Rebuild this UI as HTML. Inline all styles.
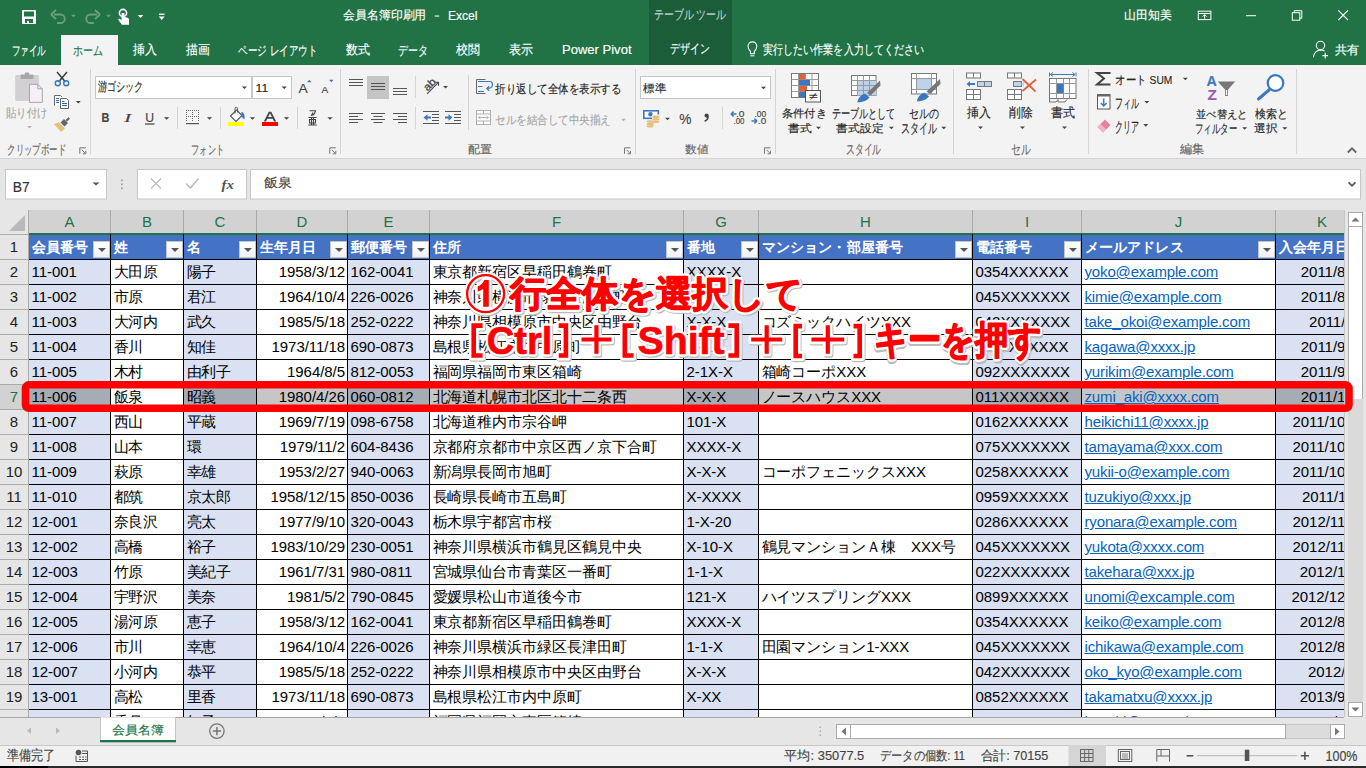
<!DOCTYPE html><html lang="ja"><head><meta charset="utf-8"><style>
*{box-sizing:border-box}
html,body{margin:0;padding:0;width:1366px;height:768px;overflow:hidden;background:#e6e6e6;font-family:"Liberation Sans",sans-serif}
.ab{position:absolute}
.colh{font-size:15px;line-height:24px;text-align:center;color:#217346;background:#d2d2d2}
.rowh{font-size:15px;line-height:24px;text-align:center}
.cell{font-size:15px;letter-spacing:-0.05px;line-height:24px;padding-left:2.5px;white-space:nowrap;overflow:hidden;color:#000}
.cell.rt{text-align:right;padding-right:2px;padding-left:0}
.cell.lk{color:#0563c1;text-decoration:underline;letter-spacing:-0.15px}
.cell.hd{color:#fff;font-weight:bold;font-size:14.4px;letter-spacing:0.2px}
.tt{font-size:14px;line-height:18px;white-space:nowrap}
.tab{font-size:14px;line-height:18px;white-space:nowrap}
.callout{font-size:38px;font-weight:bold;color:#f00;white-space:nowrap;line-height:44px;-webkit-text-stroke:0px;text-shadow:2px 0 #fff,-2px 0 #fff,0 2px #fff,0 -2px #fff,1.5px 1.5px #fff,-1.5px 1.5px #fff,1.5px -1.5px #fff,-1.5px -1.5px #fff}
.fb{width:17px;height:17px;border:1px solid #c6c6c6;background:linear-gradient(#fff,#eef0f3)}
.fb:after{content:"";position:absolute;left:4px;top:6px;border-left:4px solid transparent;border-right:4px solid transparent;border-top:4px solid #555}
</style></head><body><svg class="ab" style="left:0;top:0" width="1366" height="768" font-family="Liberation Sans, sans-serif"><rect x="0" y="0" width="1366" height="65" fill="#217346"/><rect x="649" y="0" width="83" height="65" fill="#1c5d39"/><rect x="22" y="10" width="14" height="14" rx="1" fill="#fff"/><rect x="24" y="11.5" width="10" height="5" fill="#217346"/><rect x="25" y="19" width="8" height="4" fill="#217346"/><rect x="27" y="21" width="2" height="2.5" fill="#fff"/><path d="M54 14.5 H60.5 A4.2 4.2 0 0 1 60.5 23 H57" fill="none" stroke="#6a9f80" stroke-width="1.8"/><path d="M51 14.5 L56 10 M51 14.5 L56 19" fill="none" stroke="#6a9f80" stroke-width="1.8"/><path d="M71.00 14.70h5.00l-2.50 2.60z" fill="#6a9f80"/><path d="M97 14.5 H90.5 A4.2 4.2 0 0 0 90.5 23 H94" fill="none" stroke="#6a9f80" stroke-width="1.8"/><path d="M100 14.5 L95 10 M100 14.5 L95 19" fill="none" stroke="#6a9f80" stroke-width="1.8"/><path d="M106.00 14.70h5.00l-2.50 2.60z" fill="#6a9f80"/><circle cx="123" cy="13" r="3.6" fill="none" stroke="#fff" stroke-width="1.6"/><path d="M121.6 13 V20 L119 18.5 L118.2 19.8 L122 24.8 H129 V19.5 Q129 17.8 127 17.5 L124.4 17 V13 Z" fill="#fff"/><path d="M137.75 15.00h5.50l-2.75 3.00z" fill="#fff"/><rect x="159" y="13.6" width="5.5" height="1.3" fill="#fff"/><path d="M158.8 16.5 h5.8 l-2.9 3.6z" fill="#fff"/><text x="343.00" y="19.12" font-size="12.19" fill="#fff" textLength="83.30" lengthAdjust="spacingAndGlyphs" stroke="#fff" stroke-width="0.15">会員名簿印刷用</text><rect x="434.7" y="15.5" width="4.5" height="1.1" fill="#fff"/><text x="448.00" y="19.60" font-size="12.35" fill="#fff" textLength="29.50" lengthAdjust="spacingAndGlyphs" stroke="#fff" stroke-width="0.15">Excel</text><text x="654.00" y="19.25" font-size="13.29" fill="#c3d3c9" textLength="72.00" lengthAdjust="spacingAndGlyphs" stroke="#c3d3c9" stroke-width="0.15">テーブル ツール</text><text x="1124.30" y="19.12" font-size="12.19" fill="#fff" textLength="47.70" lengthAdjust="spacingAndGlyphs" stroke="#fff" stroke-width="0.15">山田知美</text><rect x="1198.3" y="11.2" width="12.6" height="8.4" fill="none" stroke="#fff" stroke-width="1"/><path d="M1199 13.5 h11.5" stroke="#fff" stroke-width="1"/><path d="M1204.6 18.8 V14.8 M1202.6 16.6 l2 -2 l2 2" fill="none" stroke="#fff" stroke-width="1"/><rect x="1246" y="15.2" width="10" height="1" fill="#fff"/><rect x="1292.3" y="12.7" width="7.5" height="7.5" fill="none" stroke="#fff" stroke-width="1"/><path d="M1294.3 12.7 V10.7 H1301.8 V18.2 H1299.8" fill="none" stroke="#fff" stroke-width="1"/><path d="M1338.3 10.3 L1348 20 M1348 10.3 L1338.3 20" stroke="#fff" stroke-width="1.1"/><rect x="61" y="35" width="57" height="30" fill="#f3f3f3"/><text x="11.90" y="54.74" font-size="13.42" fill="#fff" textLength="34.10" lengthAdjust="spacingAndGlyphs" stroke="#fff" stroke-width="0.15">ファイル</text><text x="73.40" y="54.74" font-size="13.42" fill="#217346" textLength="29.90" lengthAdjust="spacingAndGlyphs" stroke="#217346" stroke-width="0.15">ホーム</text><text x="133.00" y="54.38" font-size="12.50" fill="#fff" textLength="23.80" lengthAdjust="spacingAndGlyphs" stroke="#fff" stroke-width="0.15">挿入</text><text x="186.00" y="54.38" font-size="12.50" fill="#fff" textLength="23.80" lengthAdjust="spacingAndGlyphs" stroke="#fff" stroke-width="0.15">描画</text><text x="238.40" y="54.74" font-size="13.42" fill="#fff" textLength="78.90" lengthAdjust="spacingAndGlyphs" stroke="#fff" stroke-width="0.15">ページ レイアウト</text><text x="346.00" y="54.38" font-size="12.50" fill="#fff" textLength="24.00" lengthAdjust="spacingAndGlyphs" stroke="#fff" stroke-width="0.15">数式</text><text x="398.00" y="54.74" font-size="13.42" fill="#fff" textLength="30.00" lengthAdjust="spacingAndGlyphs" stroke="#fff" stroke-width="0.15">データ</text><text x="456.00" y="54.38" font-size="12.50" fill="#fff" textLength="24.00" lengthAdjust="spacingAndGlyphs" stroke="#fff" stroke-width="0.15">校閲</text><text x="509.00" y="54.38" font-size="12.50" fill="#fff" textLength="24.00" lengthAdjust="spacingAndGlyphs" stroke="#fff" stroke-width="0.15">表示</text><text x="670.00" y="53.34" font-size="13.42" fill="#fff" textLength="40.00" lengthAdjust="spacingAndGlyphs" stroke="#fff" stroke-width="0.15">デザイン</text><text x="562.00" y="53.60" font-size="12.07" fill="#fff" textLength="69.50" lengthAdjust="spacingAndGlyphs" stroke="#fff" stroke-width="0.15">Power Pivot</text><path d="M750.5 51.5 Q748 49 748 46.3 A4.4 4.4 0 0 1 756.8 46.3 Q756.8 49 754.3 51.5 V53.8 H750.5 Z" fill="none" stroke="#fff" stroke-width="1.1"/><rect x="750.4" y="55.3" width="4" height="1" fill="#fff"/><text x="763.00" y="54.17" font-size="12.56" fill="#fff" textLength="161.00" lengthAdjust="spacingAndGlyphs" stroke="#fff" stroke-width="0.15">実行したい作業を入力してください</text><circle cx="1320.5" cy="45.5" r="4.2" fill="none" stroke="#fff" stroke-width="1.1"/><path d="M1313.4 57.4 Q1314 50.8 1320.5 50 Q1323 50 1324.6 51" fill="none" stroke="#fff" stroke-width="1.1"/><path d="M1325.2 52.8 V58.4 M1322.4 55.6 H1328" stroke="#fff" stroke-width="1.1"/><text x="1334.70" y="53.72" font-size="11.56" fill="#fff" textLength="24.30" lengthAdjust="spacingAndGlyphs" stroke="#fff" stroke-width="0.15">共有</text><rect x="0" y="65" width="1366" height="93" fill="#f3f3f3"/><rect x="0" y="158" width="1366" height="1" fill="#d4d4d4"/><rect x="90" y="69" width="1" height="85" fill="#d4d4d4"/><rect x="340" y="69" width="1" height="85" fill="#d4d4d4"/><rect x="635" y="69" width="1" height="85" fill="#d4d4d4"/><rect x="775" y="69" width="1" height="85" fill="#d4d4d4"/><rect x="953" y="69" width="1" height="85" fill="#d4d4d4"/><rect x="1088" y="69" width="1" height="85" fill="#d4d4d4"/><rect x="1296" y="69" width="1" height="85" fill="#d4d4d4"/><rect x="15.2" y="75" width="23.7" height="26" rx="1.5" fill="#d3d0d3"/><rect x="20.5" y="74.5" width="13" height="4.5" rx="1" fill="#a9a6a9"/><rect x="24.8" y="72.5" width="4.4" height="3" rx="1" fill="#a9a6a9"/><path d="M29.5 84.3 H37.8 L42.3 88.8 V102.4 H29.5 Z" fill="#f6f0f6" stroke="#a9a6a9" stroke-width="1"/><path d="M37.8 84.3 V88.8 H42.3" fill="none" stroke="#a9a6a9" stroke-width="1"/><text x="5.90" y="117.15" font-size="11.89" fill="#a6a6a6" textLength="41.50" lengthAdjust="spacingAndGlyphs" stroke="#a6a6a6" stroke-width="0.15">貼り付け</text><path d="M27.00 126.00h5.00l-2.50 2.60z" fill="#b5b5b5"/><path d="M57 72 L65.5 82 M67 72 L58.5 82" stroke="#3b3b3b" stroke-width="1.5"/><circle cx="57.8" cy="83.3" r="2.5" fill="none" stroke="#3c78c0" stroke-width="1.4"/><circle cx="66.2" cy="83.3" r="2.5" fill="none" stroke="#3c78c0" stroke-width="1.4"/><path d="M54.5 105.5 V95.5 H60.5 L62 97" fill="#fff" stroke="#666" stroke-width="1"/><rect x="55" y="96" width="5" height="9" fill="#fff"/><path d="M60.5 108.5 V98.5 H66.5 L68.5 100.5 V108.5 Z" fill="#fff" stroke="#666" stroke-width="1"/><path d="M56 98.5h3M56 100.5h3M56 102.5h3M62 101.5h2.5M62 103.5h5M62 105.5h5" stroke="#2e6db4" stroke-width="1"/><path d="M75.80 101.00h5.00l-2.50 2.60z" fill="#444444"/><path d="M54 124 L59 122.5 L65 128.5 L61 132 Z" fill="#e8bf78"/><path d="M60.5 122.5 L64 119 L68 123 L64.5 126.5 Z" fill="#666"/><path d="M65.5 120 L68.5 117.2 L70 118.7 L67 121.5 Z" fill="#666"/><text x="7.20" y="153.65" font-size="13.29" fill="#666666" textLength="58.70" lengthAdjust="spacingAndGlyphs" stroke="#666666" stroke-width="0.15">クリップボード</text><path d="M79.8 153.8V147.8H85.8" fill="none" stroke="#777" stroke-width="1"/><path d="M81.8 149.8L85.3 153.3M85.8 150.8V153.8H82.8" fill="none" stroke="#777" stroke-width="1"/><rect x="95.5" y="76.5" width="156" height="22" fill="#fff" stroke="#c6c6c6" stroke-width="1"/><rect x="252.5" y="76.5" width="39" height="22" fill="#fff" stroke="#c6c6c6" stroke-width="1"/><text x="97.50" y="91.12" font-size="12.53" fill="#262626" textLength="46.10" lengthAdjust="spacingAndGlyphs" stroke="#262626" stroke-width="0.15">游ゴシック</text><path d="M241.80 86.40h5.20l-2.60 2.60z" fill="#444444"/><text x="255.60" y="92.00" font-size="11.66" fill="#262626" textLength="12.60" lengthAdjust="spacingAndGlyphs" stroke="#262626" stroke-width="0.15">11</text><path d="M281.70 86.40h5.20l-2.60 2.60z" fill="#444444"/><text x="298.50" y="92.70" font-size="13.31" fill="#444" textLength="9.20" lengthAdjust="spacingAndGlyphs" stroke="#444" stroke-width="0.15">A</text><path d="M307 82.3 h4.6 l-2.3 -2.6z" fill="#3c78c0"/><text x="321.50" y="92.70" font-size="9.60" fill="#444" textLength="6.70" lengthAdjust="spacingAndGlyphs" stroke="#444" stroke-width="0.15">A</text><path d="M329 79.7 h4.6 l-2.3 2.6z" fill="#3c78c0"/><text x="101.50" y="122.00" font-size="12.62" fill="#444" font-weight="bold" textLength="7.90" lengthAdjust="spacingAndGlyphs" stroke="#444" stroke-width="0.15">B</text><text x="124.00" y="122.00" font-size="12.62" fill="#444" textLength="7.30" lengthAdjust="spacingAndGlyphs" font-style="italic" font-family="Liberation Serif" stroke="#444" stroke-width="0.15">I</text><text x="145.20" y="122.00" font-size="12.62" fill="#444" textLength="8.80" lengthAdjust="spacingAndGlyphs" stroke="#444" stroke-width="0.15">U</text><rect x="145" y="123.4" width="9.5" height="1.2" fill="#444"/><path d="M164.00 117.20h5.20l-2.60 2.60z" fill="#444444"/><rect x="177" y="107" width="1" height="22" fill="#d4d4d4"/><rect x="186" y="110" width="1" height="1" fill="#666"/><rect x="186" y="116" width="1" height="1" fill="#666"/><rect x="188" y="110" width="1" height="1" fill="#666"/><rect x="188" y="116" width="1" height="1" fill="#666"/><rect x="190" y="110" width="1" height="1" fill="#666"/><rect x="190" y="116" width="1" height="1" fill="#666"/><rect x="192" y="110" width="1" height="1" fill="#666"/><rect x="192" y="116" width="1" height="1" fill="#666"/><rect x="194" y="110" width="1" height="1" fill="#666"/><rect x="194" y="116" width="1" height="1" fill="#666"/><rect x="196" y="110" width="1" height="1" fill="#666"/><rect x="196" y="116" width="1" height="1" fill="#666"/><rect x="198" y="110" width="1" height="1" fill="#666"/><rect x="198" y="116" width="1" height="1" fill="#666"/><rect x="186" y="112" width="1" height="1" fill="#666"/><rect x="192" y="112" width="1" height="1" fill="#666"/><rect x="198" y="112" width="1" height="1" fill="#666"/><rect x="186" y="114" width="1" height="1" fill="#666"/><rect x="192" y="114" width="1" height="1" fill="#666"/><rect x="198" y="114" width="1" height="1" fill="#666"/><rect x="186" y="116" width="1" height="1" fill="#666"/><rect x="192" y="116" width="1" height="1" fill="#666"/><rect x="198" y="116" width="1" height="1" fill="#666"/><rect x="186" y="118" width="1" height="1" fill="#666"/><rect x="192" y="118" width="1" height="1" fill="#666"/><rect x="198" y="118" width="1" height="1" fill="#666"/><rect x="186" y="120" width="1" height="1" fill="#666"/><rect x="192" y="120" width="1" height="1" fill="#666"/><rect x="198" y="120" width="1" height="1" fill="#666"/><rect x="186" y="123" width="13" height="1.2" fill="#555"/><path d="M206.90 117.20h5.20l-2.60 2.60z" fill="#444444"/><rect x="220" y="107" width="1" height="22" fill="#d4d4d4"/><path d="M230.5 116 L236.5 110 L242 115.5 L236 121.5 Z" fill="#fff" stroke="#555" stroke-width="1.1"/><path d="M235 113.5 V108.5 Q235 107.3 236.3 107.3 Q237.6 107.3 237.6 108.5 V112.5" fill="none" stroke="#555" stroke-width="1"/><path d="M241.5 111.8 Q245.5 113 244.3 119.5 Q242.5 117.5 241 116.2 Z" fill="#3c78c0"/><rect x="228" y="122" width="16" height="4" fill="#ffff00"/><path d="M249.90 117.20h5.20l-2.60 2.60z" fill="#444444"/><path d="M263.8 121.5 L268.8 111.8 H271.2 L276.2 121.5 H274 L272.7 118.8 H267.3 L266 121.5 Z M268.1 117 H271.9 L270 113.2 Z" fill="#444" fill-rule="evenodd"/><rect x="262" y="122" width="16" height="4" fill="#ff0000"/><path d="M283.90 117.20h5.20l-2.60 2.60z" fill="#444444"/><rect x="297" y="107" width="1" height="22" fill="#d4d4d4"/><path d="M309.5 110.8 H315.5 Q315 113.5 312.5 115.5 M312.8 112.6 Q312.8 114 311 115.8" fill="none" stroke="#444" stroke-width="1.1"/><path d="M308.5 117.5 H316.5 M308.3 125 H316.7 M309.5 119.5 H315.5 V123 H309.5 Z M311.5 117.5 V125 M313.5 117.5 V125" fill="none" stroke="#444" stroke-width="1.1"/><path d="M327.40 117.20h5.20l-2.60 2.60z" fill="#444444"/><text x="191.00" y="153.74" font-size="13.42" fill="#666666" textLength="33.00" lengthAdjust="spacingAndGlyphs" stroke="#666666" stroke-width="0.15">フォント</text><path d="M329.8 153.8V147.8H335.8" fill="none" stroke="#777" stroke-width="1"/><path d="M331.8 149.8L335.3 153.3M335.8 150.8V153.8H332.8" fill="none" stroke="#777" stroke-width="1"/><rect x="349" y="79" width="14" height="1" fill="#555"/><rect x="349" y="82" width="14" height="1" fill="#555"/><rect x="349" y="85" width="14" height="1" fill="#555"/><rect x="367" y="76" width="22" height="23" fill="#c5c5c5"/><rect x="371" y="83" width="14" height="1" fill="#555"/><rect x="371" y="86" width="14" height="1" fill="#555"/><rect x="371" y="89" width="14" height="1" fill="#555"/><rect x="393" y="88" width="14" height="1" fill="#555"/><rect x="393" y="91" width="14" height="1" fill="#555"/><rect x="393" y="94" width="14" height="1" fill="#555"/><rect x="415" y="76" width="1" height="22" fill="#d4d4d4"/><g transform="translate(429.5,84.5) rotate(-45)"><text x="-6.5" y="3.5" font-size="10.5" fill="#444" stroke="#444" stroke-width="0.3" textLength="13" lengthAdjust="spacingAndGlyphs">ab</text></g><path d="M427 93.8 L438.5 82.3 M435 82.3 H438.5 V85.8" fill="none" stroke="#444" stroke-width="1.1"/><path d="M443.00 85.90h5.00l-2.50 2.60z" fill="#444444"/><rect x="349" y="113" width="14" height="1" fill="#555"/><rect x="371.0" y="113" width="14" height="1" fill="#555"/><rect x="393" y="113" width="14" height="1" fill="#555"/><rect x="349" y="116" width="9" height="1" fill="#555"/><rect x="373.5" y="116" width="9" height="1" fill="#555"/><rect x="398" y="116" width="9" height="1" fill="#555"/><rect x="349" y="119" width="14" height="1" fill="#555"/><rect x="371.0" y="119" width="14" height="1" fill="#555"/><rect x="393" y="119" width="14" height="1" fill="#555"/><rect x="349" y="122" width="9" height="1" fill="#555"/><rect x="373.5" y="122" width="9" height="1" fill="#555"/><rect x="398" y="122" width="9" height="1" fill="#555"/><rect x="415" y="107" width="1" height="22" fill="#d4d4d4"/><rect x="423" y="111" width="16" height="1" fill="#555"/><rect x="423" y="123" width="16" height="1" fill="#555"/><rect x="432" y="114" width="7" height="1" fill="#555"/><rect x="432" y="117" width="7" height="1" fill="#555"/><rect x="432" y="120" width="7" height="1" fill="#555"/><rect x="445" y="111" width="16" height="1" fill="#555"/><rect x="445" y="123" width="16" height="1" fill="#555"/><rect x="454" y="114" width="7" height="1" fill="#555"/><rect x="454" y="117" width="7" height="1" fill="#555"/><rect x="454" y="120" width="7" height="1" fill="#555"/><path d="M423.5 117.5 L427.5 114.2 V116.6 H431 V118.4 H427.5 V120.8 Z" fill="#3c78c0"/><path d="M452.5 117.5 L448.5 114.2 V116.6 H445 V118.4 H448.5 V120.8 Z" fill="#3c78c0"/><rect x="468" y="75" width="1" height="55" fill="#d4d4d4"/><path d="M485.5 79.5 H476.5 V93.5 H485.5" fill="none" stroke="#666" stroke-width="1"/><path d="M478 81.5h12.5M478 86.5h4.5M478 91.5h6" stroke="#3c78c0" stroke-width="1.1"/><path d="M490.5 81.5 Q492.5 82 492.5 85 Q492 88.5 487 88.5 M489.2 86.3 L486.8 88.5 L489.2 90.7" fill="none" stroke="#3c78c0" stroke-width="1.2"/><text x="495.30" y="92.98" font-size="11.67" fill="#262626" textLength="125.80" lengthAdjust="spacingAndGlyphs" stroke="#262626" stroke-width="0.15">折り返して全体を表示する</text><rect x="476.5" y="110.5" width="14" height="14" fill="#fff" stroke="#b0b0b0" stroke-width="1"/><path d="M476.5 114h14M476.5 121h14M483.5 110.5v3.5M483.5 121v3.5" stroke="#b0b0b0" stroke-width="1"/><path d="M478.5 117.5h10M478.5 117.5l2 -1.5M478.5 117.5l2 1.5M488.5 117.5l-2 -1.5M488.5 117.5l-2 1.5" stroke="#b0b0b0" stroke-width="0.9"/><text x="495.30" y="123.81" font-size="12.22" fill="#a6a6a6" textLength="115.20" lengthAdjust="spacingAndGlyphs" stroke="#a6a6a6" stroke-width="0.15">セルを結合して中央揃え</text><path d="M621.00 118.70h5.00l-2.50 2.60z" fill="#b5b5b5"/><text x="468.00" y="152.90" font-size="11.04" fill="#666666" textLength="24.00" lengthAdjust="spacingAndGlyphs" stroke="#666666" stroke-width="0.15">配置</text><path d="M624.5 153.8V147.8H630.5" fill="none" stroke="#777" stroke-width="1"/><path d="M626.5 149.8L630 153.3M630.5 150.8V153.8H627.5" fill="none" stroke="#777" stroke-width="1"/><rect x="640.5" y="76.5" width="130" height="22" fill="#fff" stroke="#c6c6c6" stroke-width="1"/><text x="643.30" y="92.32" font-size="10.94" fill="#262626" textLength="23.00" lengthAdjust="spacingAndGlyphs" stroke="#262626" stroke-width="0.15">標準</text><path d="M760.90 86.70h5.20l-2.60 2.60z" fill="#444444"/><rect x="643.8" y="110.8" width="14.5" height="7.5" fill="#fff" stroke="#3c78c0" stroke-width="1.6"/><circle cx="650.5" cy="114.3" r="2.3" fill="#3c78c0"/><rect x="652" y="114.5" width="7.5" height="5" fill="#f3f3f3"/><ellipse cx="655.8" cy="116.8" rx="3.6" ry="1.3" fill="#e8bf78"/><ellipse cx="655.8" cy="119.3" rx="3.6" ry="1.3" fill="#e8bf78"/><ellipse cx="655.8" cy="121.8" rx="3.6" ry="1.3" fill="#e8bf78"/><ellipse cx="650.2" cy="121.5" rx="3.6" ry="1.3" fill="#e8bf78"/><ellipse cx="650.2" cy="124" rx="3.6" ry="1.3" fill="#e8bf78"/><ellipse cx="650.2" cy="126.3" rx="3.6" ry="1.3" fill="#e8bf78"/><path d="M665.00 117.70h5.00l-2.50 2.60z" fill="#444444"/><text x="679.20" y="123.70" font-size="14.68" fill="#444" textLength="12.20" lengthAdjust="spacingAndGlyphs" stroke="#444" stroke-width="0.15">%</text><circle cx="706.6" cy="115.6" r="2.1" fill="#444"/><path d="M707.8 116 Q708.6 119.6 704.6 121.2" fill="none" stroke="#444" stroke-width="1.6"/><rect x="722" y="107" width="1" height="22" fill="#d4d4d4"/><text x="736.00" y="117.20" font-size="8.78" fill="#444" textLength="8.50" lengthAdjust="spacingAndGlyphs" stroke="#444" stroke-width="0.15">.0</text><text x="733.50" y="123.70" font-size="8.50" fill="#444" textLength="11.00" lengthAdjust="spacingAndGlyphs" stroke="#444" stroke-width="0.15">.00</text><path d="M731 114 H736.5 M731 114 l2.6 -2.4 M731 114 l2.6 2.4" fill="none" stroke="#3c78c0" stroke-width="1.5"/><text x="754.50" y="117.20" font-size="8.78" fill="#444" textLength="11.80" lengthAdjust="spacingAndGlyphs" stroke="#444" stroke-width="0.15">.00</text><text x="758.00" y="123.70" font-size="8.50" fill="#444" textLength="8.30" lengthAdjust="spacingAndGlyphs" stroke="#444" stroke-width="0.15">.0</text><path d="M751.5 121 H757 M757 121 l-2.6 -2.4 M757 121 l-2.6 2.4" fill="none" stroke="#3c78c0" stroke-width="1.5"/><text x="685.00" y="153.24" font-size="11.46" fill="#666666" textLength="23.50" lengthAdjust="spacingAndGlyphs" stroke="#666666" stroke-width="0.15">数値</text><path d="M764.5 153.8V147.8H770.5" fill="none" stroke="#777" stroke-width="1"/><path d="M766.5 149.8L770 153.3M770.5 150.8V153.8H767.5" fill="none" stroke="#777" stroke-width="1"/><rect x="791.5" y="73.5" width="27" height="24" fill="#fff" stroke="#777" stroke-width="1"/><path d="M798.5 73.5V97.5M805.5 73.5V97.5M812 73.5V97.5M791.5 79.5H818.5M791.5 85.5H818.5M791.5 91.5H818.5" stroke="#999" stroke-width="1"/><rect x="799" y="74" width="6" height="5.5" fill="#e0623c"/><rect x="799" y="80" width="11" height="5.5" fill="#3c78c0"/><rect x="799" y="86" width="8" height="5.5" fill="#e0623c"/><rect x="799" y="92" width="6" height="5.5" fill="#3c78c0"/><rect x="805.5" y="90.5" width="15" height="11.5" fill="#fff" stroke="#555" stroke-width="1"/><text x="808.5" y="100" font-size="11" fill="#333" textLength="9" lengthAdjust="spacingAndGlyphs">≠</text><text x="781.80" y="117.34" font-size="11.22" fill="#262626" textLength="45.30" lengthAdjust="spacingAndGlyphs" stroke="#262626" stroke-width="0.15">条件付き</text><text x="788.00" y="131.98" font-size="11.15" fill="#262626" textLength="23.60" lengthAdjust="spacingAndGlyphs" stroke="#262626" stroke-width="0.15">書式</text><path d="M816.00 126.70h5.00l-2.50 2.60z" fill="#444444"/><rect x="851.5" y="75.5" width="24.5" height="20" fill="#fff" stroke="#777" stroke-width="1"/><rect x="857" y="80.5" width="19" height="15" fill="#bdd3ec"/><path d="M857.5 75.5V95.5M863.5 75.5V95.5M869.5 75.5V95.5M851.5 80.5H876M851.5 85.5H876M851.5 90.5H876" stroke="#999" stroke-width="1"/><path d="M867 93 L880 80.5 L880.5 85.5 L870.5 95.5 Z" fill="#777"/><path d="M857.5 102.5 Q858 96 865 93.5 L869.5 97.5 Q866 102 857.5 102.5 Z" fill="#3c78c0"/><text x="831.90" y="117.81" font-size="12.66" fill="#262626" textLength="63.60" lengthAdjust="spacingAndGlyphs" stroke="#262626" stroke-width="0.15">テーブルとして</text><text x="836.20" y="132.24" font-size="11.46" fill="#262626" textLength="47.10" lengthAdjust="spacingAndGlyphs" stroke="#262626" stroke-width="0.15">書式設定</text><path d="M888.90 126.70h5.00l-2.50 2.60z" fill="#444444"/><rect x="911.5" y="73.5" width="25" height="20.5" fill="#fff" stroke="#777" stroke-width="1"/><path d="M911.5 78.5H936.5M911.5 89.5H936.5M916.5 73.5V94M931.5 73.5V94" stroke="#999" stroke-width="1"/><rect x="917" y="79" width="14" height="10" fill="#bdd3ec"/><path d="M926.5 91.5 L940 79 L940.5 84 L930 94 Z" fill="#777"/><path d="M917 101.5 Q917.5 95 924.5 92.5 L929 96.5 Q925.5 101 917 101.5 Z" fill="#3c78c0"/><text x="909.00" y="117.81" font-size="12.66" fill="#262626" textLength="29.90" lengthAdjust="spacingAndGlyphs" stroke="#262626" stroke-width="0.15">セルの</text><text x="901.00" y="132.69" font-size="13.92" fill="#262626" textLength="35.80" lengthAdjust="spacingAndGlyphs" stroke="#262626" stroke-width="0.15">スタイル</text><path d="M941.30 126.70h5.00l-2.50 2.60z" fill="#444444"/><text x="846.00" y="153.69" font-size="13.92" fill="#666666" textLength="35.30" lengthAdjust="spacingAndGlyphs" stroke="#666666" stroke-width="0.15">スタイル</text><rect x="966.5" y="73.0" width="14" height="5" fill="#fff" stroke="#777" stroke-width="1"/><rect x="973.0" y="73.0" width="1" height="5" fill="#777"/><rect x="977.5" y="81.5" width="14" height="5" fill="#bdd3ec" stroke="#777" stroke-width="1"/><rect x="984.0" y="81.5" width="1" height="5" fill="#777"/><path d="M966.5 84 L970 81 V83 H975 V85 H970 V87 Z" fill="#3c78c0"/><rect x="966.5" y="89.5" width="14" height="10" fill="#fff" stroke="#777" stroke-width="1"/><path d="M966.5 94.5H980.5M973.5 89.5V99.5" stroke="#777" stroke-width="1"/><text x="966.90" y="117.08" font-size="12.50" fill="#262626" textLength="23.70" lengthAdjust="spacingAndGlyphs" stroke="#262626" stroke-width="0.15">挿入</text><path d="M978.00 126.40h5.00l-2.50 2.60z" fill="#444444"/><rect x="1007.5" y="73.0" width="14" height="5" fill="#fff" stroke="#777" stroke-width="1"/><rect x="1014.0" y="73.0" width="1" height="5" fill="#777"/><rect x="1013.5" y="81.5" width="8" height="5" fill="#bdd3ec" stroke="#777" stroke-width="1"/><path d="M1021 84 L1024 81.5 V86.5 Z" fill="#bdd3ec"/><rect x="1007.5" y="89.5" width="14" height="10" fill="#fff" stroke="#777" stroke-width="1"/><path d="M1007.5 94.5H1021.5M1014.5 89.5V99.5" stroke="#777" stroke-width="1"/><path d="M1022.5 79 L1035.5 91.5 M1036 79.5 L1022.5 91" stroke="#e0623c" stroke-width="1.8"/><text x="1009.40" y="117.08" font-size="12.50" fill="#262626" textLength="23.60" lengthAdjust="spacingAndGlyphs" stroke="#262626" stroke-width="0.15">削除</text><path d="M1020.00 126.40h5.00l-2.50 2.60z" fill="#444444"/><path d="M1049.5 72.5V76.5M1076 72.5V76.5M1050.5 74.5H1075M1050.5 74.5l2.5 -2M1050.5 74.5l2.5 2M1075 74.5l-2.5 -2M1075 74.5l-2.5 2" fill="none" stroke="#3c78c0" stroke-width="1"/><rect x="1049.5" y="78.5" width="26.5" height="20" fill="#fff" stroke="#777" stroke-width="1"/><path d="M1056.5 78.5V98.5M1063.5 78.5V98.5M1069.5 78.5V98.5M1049.5 83.5H1076M1049.5 93.5H1076" stroke="#999" stroke-width="1"/><rect x="1057" y="84" width="6.5" height="9" fill="#3c78c0"/><path d="M1049.5 98.5 V102 H1056 L1058 99.5 M1058 99.5 V102 H1065 L1067 99.5" fill="none" stroke="#777" stroke-width="1"/><text x="1051.00" y="117.08" font-size="12.50" fill="#262626" textLength="24.00" lengthAdjust="spacingAndGlyphs" stroke="#262626" stroke-width="0.15">書式</text><path d="M1062.00 126.40h5.00l-2.50 2.60z" fill="#444444"/><text x="1011.00" y="153.69" font-size="13.92" fill="#666666" textLength="19.60" lengthAdjust="spacingAndGlyphs" stroke="#666666" stroke-width="0.15">セル</text><path d="M1110.5 73 H1097 L1104 78.5 L1097 84.5 H1110.5" fill="none" stroke="#444" stroke-width="2"/><text x="1115.40" y="84.49" font-size="11.77" fill="#262626" textLength="57.00" lengthAdjust="spacingAndGlyphs" stroke="#262626" stroke-width="0.15">オート SUM</text><path d="M1182.80 77.70h5.00l-2.50 2.60z" fill="#444444"/><rect x="1097.5" y="94.5" width="12.5" height="14.5" fill="#fff" stroke="#555" stroke-width="1"/><rect x="1097.5" y="94" width="12.5" height="2.5" fill="#666"/><path d="M1103.7 98.5 V106 M1100.8 103 L1103.7 106 L1106.6 103" fill="none" stroke="#3c78c0" stroke-width="1.5"/><text x="1115.40" y="107.69" font-size="13.92" fill="#262626" textLength="24.10" lengthAdjust="spacingAndGlyphs" stroke="#262626" stroke-width="0.15">フィル</text><path d="M1144.30 100.90h5.00l-2.50 2.60z" fill="#444444"/><path d="M1097.5 127 L1105 119.5 L1110.5 125 L1103 132.5 Z" fill="#e8839b"/><path d="M1097.5 127 L1100.5 124 L1106 129.5 L1103 132.5 Z" fill="#f3b6c4"/><text x="1115.40" y="131.51" font-size="14.81" fill="#262626" textLength="24.10" lengthAdjust="spacingAndGlyphs" stroke="#262626" stroke-width="0.15">クリア</text><path d="M1143.30 124.10h5.00l-2.50 2.60z" fill="#444444"/><text x="1206.40" y="85.60" font-size="14.13" fill="#3c78c0" font-weight="bold" textLength="10.30" lengthAdjust="spacingAndGlyphs" stroke="#3c78c0" stroke-width="0.15">A</text><text x="1207.40" y="100.00" font-size="15.50" fill="#9b59b6" font-weight="bold" textLength="9.30" lengthAdjust="spacingAndGlyphs" stroke="#9b59b6" stroke-width="0.15">Z</text><path d="M1217.7 81.5 H1235.2 L1228 89.5 V96 H1225 V89.5 Z" fill="#777"/><path d="M1225.8 90 V95.2 H1227.2 V90" fill="#f3f3f3"/><text x="1196.00" y="118.03" font-size="11.33" fill="#262626" textLength="51.50" lengthAdjust="spacingAndGlyphs" stroke="#262626" stroke-width="0.15">並べ替えと</text><text x="1195.00" y="132.77" font-size="13.04" fill="#262626" textLength="42.20" lengthAdjust="spacingAndGlyphs" stroke="#262626" stroke-width="0.15">フィルター</text><path d="M1242.20 127.20h5.00l-2.50 2.60z" fill="#444444"/><circle cx="1275.5" cy="83" r="7.8" fill="#fff" stroke="#3c78c0" stroke-width="2.2"/><path d="M1269.5 89.5 L1258.5 99" stroke="#3c78c0" stroke-width="3" stroke-linecap="round"/><text x="1254.70" y="117.98" font-size="11.67" fill="#262626" textLength="32.90" lengthAdjust="spacingAndGlyphs" stroke="#262626" stroke-width="0.15">検索と</text><text x="1254.00" y="132.35" font-size="10.73" fill="#262626" textLength="23.30" lengthAdjust="spacingAndGlyphs" stroke="#262626" stroke-width="0.15">選択</text><path d="M1282.30 127.20h5.00l-2.50 2.60z" fill="#444444"/><text x="1179.60" y="152.69" font-size="11.77" fill="#666666" textLength="24.30" lengthAdjust="spacingAndGlyphs" stroke="#666666" stroke-width="0.15">編集</text><path d="M1347.8 152.5 L1352 148.3 L1356.2 152.5" fill="none" stroke="#666" stroke-width="1.9"/><rect x="0" y="159" width="1366" height="51" fill="#e6e6e6"/><rect x="5.5" y="169.5" width="101" height="29.5" fill="#fff" stroke="#c6c6c6" stroke-width="1"/><text x="12.70" y="192.00" font-size="15.09" fill="#333" textLength="16.90" lengthAdjust="spacingAndGlyphs" stroke="#333" stroke-width="0.15">B7</text><path d="M92.50 182.40h7.00l-3.50 3.20z" fill="#555"/><rect x="121" y="179.5" width="1.6" height="1.6" fill="#999"/><rect x="121" y="183.5" width="1.6" height="1.6" fill="#999"/><rect x="121" y="187.5" width="1.6" height="1.6" fill="#999"/><rect x="137.5" y="169.5" width="109" height="29.5" fill="#fff" stroke="#c6c6c6" stroke-width="1"/><path d="M151 178.5 L161 188.5 M161 178.5 L151 188.5" stroke="#bdbdbd" stroke-width="1.3"/><path d="M186 183.5 L190.5 188 L198.5 178.5" fill="none" stroke="#bdbdbd" stroke-width="1.6"/><text x="221.5" y="188.5" font-size="13" font-style="italic" font-weight="bold" font-family="Liberation Serif" fill="#555" textLength="12.5" lengthAdjust="spacingAndGlyphs">fx</text><rect x="250.5" y="169.5" width="1110" height="29.5" fill="#fff" stroke="#c6c6c6" stroke-width="1"/><text x="263.60" y="187.09" font-size="13.02" fill="#444" textLength="28.10" lengthAdjust="spacingAndGlyphs" stroke="#444" stroke-width="0.15">飯泉</text><path d="M1348.5 182.3 L1352 185.8 L1355.5 182.3" fill="none" stroke="#555" stroke-width="1.8"/><rect x="1344" y="210" width="22" height="507" fill="#e6e6e6"/><rect x="1348.5" y="212.5" width="14" height="14" fill="#fff" stroke="#ababab" stroke-width="1"/><path d="M1351.5 221.5 h8 l-4 -4z" fill="#777"/><rect x="1348.5" y="226.5" width="14" height="173" fill="#fff" stroke="#ababab" stroke-width="1"/><rect x="1348" y="399" width="15" height="304" fill="#dadada"/><rect x="1344" y="210" width="1" height="507" fill="#c6c6c6"/><rect x="1348.5" y="702.5" width="14" height="14" fill="#fff" stroke="#ababab" stroke-width="1"/><path d="M1351.5 707.5 h8 l-4 4z" fill="#777"/><rect x="0" y="717" width="1366" height="28" fill="#e6e6e6"/><rect x="0" y="717" width="1344" height="1" fill="#a8a8a8"/><path d="M31 727.5 L27 730.8 L31 734" fill="#b8b8b8"/><path d="M56 727.5 L60 730.8 L56 734" fill="#b8b8b8"/><rect x="100.5" y="717" width="75" height="25" fill="#fff" stroke="#c6c6c6" stroke-width="1"/><rect x="100" y="740" width="76" height="2.2" fill="#217346"/><text x="112.00" y="734.27" font-size="11.87" fill="#217346" textLength="51.60" lengthAdjust="spacingAndGlyphs" stroke="#217346" stroke-width="0.15">会員名簿</text><circle cx="216.9" cy="731.1" r="7.2" fill="none" stroke="#777" stroke-width="1.3"/><path d="M216.9 727 V735.2 M212.8 731.1 H221" stroke="#777" stroke-width="1.5"/><rect x="819.5" y="726.5" width="1.5" height="1.5" fill="#aaa"/><rect x="819.5" y="730.5" width="1.5" height="1.5" fill="#aaa"/><rect x="819.5" y="734.5" width="1.5" height="1.5" fill="#aaa"/><rect x="836.5" y="724.5" width="508" height="14" fill="#dcdcdc" stroke="#c6c6c6" stroke-width="1"/><rect x="836.5" y="724.5" width="14" height="14" fill="#fff" stroke="#ababab" stroke-width="1"/><path d="M846 727.5 L841.5 731.5 L846 735.5z" fill="#777"/><rect x="850.5" y="724.5" width="435" height="14" fill="#fff" stroke="#ababab" stroke-width="1"/><rect x="1330.5" y="724.5" width="14" height="14" fill="#fff" stroke="#ababab" stroke-width="1"/><path d="M1335 727.5 L1339.5 731.5 L1335 735.5z" fill="#777"/><rect x="0" y="746" width="1366" height="20" fill="#f1f1f1"/><rect x="0" y="745" width="1366" height="1" fill="#c8c8c8"/><rect x="0" y="766" width="1366" height="2" fill="#2b2b2b"/><rect x="0" y="766" width="48" height="2" fill="#000"/><text x="6.60" y="760.38" font-size="13.75" fill="#444" textLength="48.30" lengthAdjust="spacingAndGlyphs" stroke="#444" stroke-width="0.15">準備完了</text><circle cx="78.5" cy="752.5" r="2.8" fill="#555"/><path d="M76 755.5 V761.5 H87.5 V751 H82" fill="none" stroke="#555" stroke-width="1"/><path d="M79 757h2M82 757h2M85 757h1.5M79 759.5h2M82 759.5h2M85 759.5h1.5M82 753.5h5" stroke="#555" stroke-width="1"/><text x="784.40" y="760.34" font-size="12.78" fill="#444" textLength="79.90" lengthAdjust="spacingAndGlyphs" stroke="#444" stroke-width="0.15">平均: 35077.5</text><text x="879.80" y="760.34" font-size="12.78" fill="#444" textLength="85.20" lengthAdjust="spacingAndGlyphs" stroke="#444" stroke-width="0.15">データの個数: 11</text><text x="980.50" y="760.34" font-size="12.78" fill="#444" textLength="67.90" lengthAdjust="spacingAndGlyphs" stroke="#444" stroke-width="0.15">合計: 70155</text><rect x="1068.5" y="745" width="37.5" height="21" fill="#d5d5d5"/><rect x="1080.5" y="749.5" width="12.5" height="12" fill="none" stroke="#666" stroke-width="1"/><path d="M1084.7 749.5V761.5M1088.8 749.5V761.5M1080.5 753.5H1093M1080.5 757.5H1093" stroke="#666" stroke-width="1"/><rect x="1118.3" y="749.5" width="13.5" height="12" fill="none" stroke="#666" stroke-width="1"/><rect x="1120.5" y="751.5" width="9" height="8" fill="none" stroke="#666" stroke-width="1"/><path d="M1122 754h6M1122 756h6M1122 758h6" stroke="#666" stroke-width="0.8"/><path d="M1156.8 761.5V749.5H1169.5V761.5M1156.8 756H1169.5M1161 749.5V756" fill="none" stroke="#666" stroke-width="1"/><rect x="1186.6" y="755" width="6.7" height="1.6" fill="#555"/><rect x="1197" y="755.2" width="100" height="1" fill="#b5b5b5"/><rect x="1244.8" y="749.7" width="4.5" height="11.3" fill="#555"/><path d="M1300.8 755.8 H1309 M1304.9 751.7 V760" stroke="#555" stroke-width="1.6"/><text x="1325.50" y="760.50" font-size="13.85" fill="#444" textLength="32.00" lengthAdjust="spacingAndGlyphs" stroke="#444" stroke-width="0.15">100%</text></svg><div id="grid" style="position:absolute;left:0;top:210px;width:1344px;height:507px;overflow:hidden;background:#fff"><div class="ab" style="left:0;top:0;width:1344px;height:24px;background:#e6e6e6"></div><svg class="ab" style="left:0;top:0" width="28" height="24"><path d="M9 21 L25 5 L25 21 Z" fill="#b9b9b9"/></svg><div class="ab colh" style="left:29px;top:0;width:81px;height:23px">A</div><div class="ab" style="left:110px;top:0;width:1px;height:23px;background:#ababab"></div><div class="ab colh" style="left:111px;top:0;width:72px;height:23px">B</div><div class="ab" style="left:183px;top:0;width:1px;height:23px;background:#ababab"></div><div class="ab colh" style="left:184px;top:0;width:72px;height:23px">C</div><div class="ab" style="left:256px;top:0;width:1px;height:23px;background:#ababab"></div><div class="ab colh" style="left:257px;top:0;width:90px;height:23px">D</div><div class="ab" style="left:347px;top:0;width:1px;height:23px;background:#ababab"></div><div class="ab colh" style="left:348px;top:0;width:81px;height:23px">E</div><div class="ab" style="left:429px;top:0;width:1px;height:23px;background:#ababab"></div><div class="ab colh" style="left:430px;top:0;width:253px;height:23px">F</div><div class="ab" style="left:683px;top:0;width:1px;height:23px;background:#ababab"></div><div class="ab colh" style="left:684px;top:0;width:74px;height:23px">G</div><div class="ab" style="left:758px;top:0;width:1px;height:23px;background:#ababab"></div><div class="ab colh" style="left:759px;top:0;width:213px;height:23px">H</div><div class="ab" style="left:972px;top:0;width:1px;height:23px;background:#ababab"></div><div class="ab colh" style="left:973px;top:0;width:108px;height:23px">I</div><div class="ab" style="left:1081px;top:0;width:1px;height:23px;background:#ababab"></div><div class="ab colh" style="left:1082px;top:0;width:193px;height:23px">J</div><div class="ab" style="left:1275px;top:0;width:1px;height:23px;background:#ababab"></div><div class="ab colh" style="left:1276px;top:0;width:92px;height:23px">K</div><div class="ab" style="left:1368px;top:0;width:1px;height:23px;background:#ababab"></div><div class="ab" style="left:29px;top:23px;width:1344px;height:2px;background:#217346"></div><div class="ab" style="left:0;top:24px;width:28px;height:1px;background:#ababab"></div><div class="ab rowh" style="left:0;top:25px;width:28px;height:24px;background:#e6e6e6;color:#222">1</div><div class="ab" style="left:0;top:49px;width:28px;height:1px;background:#ababab"></div><div class="ab rowh" style="left:0;top:50px;width:28px;height:24px;background:#e6e6e6;color:#222">2</div><div class="ab" style="left:0;top:74px;width:28px;height:1px;background:#ababab"></div><div class="ab rowh" style="left:0;top:75px;width:28px;height:24px;background:#e6e6e6;color:#222">3</div><div class="ab" style="left:0;top:99px;width:28px;height:1px;background:#ababab"></div><div class="ab rowh" style="left:0;top:100px;width:28px;height:24px;background:#e6e6e6;color:#222">4</div><div class="ab" style="left:0;top:124px;width:28px;height:1px;background:#ababab"></div><div class="ab rowh" style="left:0;top:125px;width:28px;height:24px;background:#e6e6e6;color:#222">5</div><div class="ab" style="left:0;top:149px;width:28px;height:1px;background:#ababab"></div><div class="ab rowh" style="left:0;top:150px;width:28px;height:24px;background:#e6e6e6;color:#222">6</div><div class="ab" style="left:0;top:174px;width:28px;height:1px;background:#ababab"></div><div class="ab rowh" style="left:0;top:175px;width:28px;height:24px;background:#d2d2d2;color:#217346">7</div><div class="ab" style="left:0;top:199px;width:28px;height:1px;background:#ababab"></div><div class="ab rowh" style="left:0;top:200px;width:28px;height:24px;background:#e6e6e6;color:#222">8</div><div class="ab" style="left:0;top:224px;width:28px;height:1px;background:#ababab"></div><div class="ab rowh" style="left:0;top:225px;width:28px;height:24px;background:#e6e6e6;color:#222">9</div><div class="ab" style="left:0;top:249px;width:28px;height:1px;background:#ababab"></div><div class="ab rowh" style="left:0;top:250px;width:28px;height:24px;background:#e6e6e6;color:#222">10</div><div class="ab" style="left:0;top:274px;width:28px;height:1px;background:#ababab"></div><div class="ab rowh" style="left:0;top:275px;width:28px;height:24px;background:#e6e6e6;color:#222">11</div><div class="ab" style="left:0;top:299px;width:28px;height:1px;background:#ababab"></div><div class="ab rowh" style="left:0;top:300px;width:28px;height:24px;background:#e6e6e6;color:#222">12</div><div class="ab" style="left:0;top:324px;width:28px;height:1px;background:#ababab"></div><div class="ab rowh" style="left:0;top:325px;width:28px;height:24px;background:#e6e6e6;color:#222">13</div><div class="ab" style="left:0;top:349px;width:28px;height:1px;background:#ababab"></div><div class="ab rowh" style="left:0;top:350px;width:28px;height:24px;background:#e6e6e6;color:#222">14</div><div class="ab" style="left:0;top:374px;width:28px;height:1px;background:#ababab"></div><div class="ab rowh" style="left:0;top:375px;width:28px;height:24px;background:#e6e6e6;color:#222">15</div><div class="ab" style="left:0;top:399px;width:28px;height:1px;background:#ababab"></div><div class="ab rowh" style="left:0;top:400px;width:28px;height:24px;background:#e6e6e6;color:#222">16</div><div class="ab" style="left:0;top:424px;width:28px;height:1px;background:#ababab"></div><div class="ab rowh" style="left:0;top:425px;width:28px;height:24px;background:#e6e6e6;color:#222">17</div><div class="ab" style="left:0;top:449px;width:28px;height:1px;background:#ababab"></div><div class="ab rowh" style="left:0;top:450px;width:28px;height:24px;background:#e6e6e6;color:#222">18</div><div class="ab" style="left:0;top:474px;width:28px;height:1px;background:#ababab"></div><div class="ab rowh" style="left:0;top:475px;width:28px;height:24px;background:#e6e6e6;color:#222">19</div><div class="ab" style="left:0;top:499px;width:28px;height:1px;background:#ababab"></div><div class="ab rowh" style="left:0;top:500px;width:28px;height:24px;background:#e6e6e6;color:#222">20</div><div class="ab" style="left:0;top:524px;width:28px;height:1px;background:#ababab"></div><div class="ab" style="left:28px;top:0;width:1px;height:507px;background:#ababab"></div><div class="ab" style="left:27px;top:174px;width:2px;height:25px;background:#217346"></div><div class="ab cell hd" style="left:29px;top:25px;width:81px;height:24px;background:#4472c4">会員番号</div><div class="ab fb" style="left:93px;top:31px"></div><div class="ab cell hd" style="left:111px;top:25px;width:72px;height:24px;background:#4472c4">姓</div><div class="ab fb" style="left:166px;top:31px"></div><div class="ab cell hd" style="left:184px;top:25px;width:72px;height:24px;background:#4472c4">名</div><div class="ab fb" style="left:239px;top:31px"></div><div class="ab cell hd" style="left:257px;top:25px;width:90px;height:24px;background:#4472c4">生年月日</div><div class="ab fb" style="left:330px;top:31px"></div><div class="ab cell hd" style="left:348px;top:25px;width:81px;height:24px;background:#4472c4">郵便番号</div><div class="ab fb" style="left:412px;top:31px"></div><div class="ab cell hd" style="left:430px;top:25px;width:253px;height:24px;background:#4472c4">住所</div><div class="ab fb" style="left:666px;top:31px"></div><div class="ab cell hd" style="left:684px;top:25px;width:74px;height:24px;background:#4472c4">番地</div><div class="ab fb" style="left:741px;top:31px"></div><div class="ab cell hd" style="left:759px;top:25px;width:213px;height:24px;background:#4472c4">マンション・部屋番号</div><div class="ab fb" style="left:955px;top:31px"></div><div class="ab cell hd" style="left:973px;top:25px;width:108px;height:24px;background:#4472c4">電話番号</div><div class="ab fb" style="left:1064px;top:31px"></div><div class="ab cell hd" style="left:1082px;top:25px;width:193px;height:24px;background:#4472c4">メールアドレス</div><div class="ab fb" style="left:1258px;top:31px"></div><div class="ab cell hd" style="left:1276px;top:25px;width:92px;height:24px;background:#4472c4">入会年月日</div><div class="ab fb" style="left:1351px;top:31px"></div><div class="ab cell" style="left:29px;top:50px;width:81px;height:24px;background:#d9e1f2">11-001</div><div class="ab cell" style="left:111px;top:50px;width:72px;height:24px;background:#ffffff">大田原</div><div class="ab cell" style="left:184px;top:50px;width:72px;height:24px;background:#d9e1f2">陽子</div><div class="ab cell rt" style="left:257px;top:50px;width:90px;height:24px;background:#ffffff">1958/3/12</div><div class="ab cell" style="left:348px;top:50px;width:81px;height:24px;background:#d9e1f2">162-0041</div><div class="ab cell" style="left:430px;top:50px;width:253px;height:24px;background:#ffffff">東京都新宿区早稲田鶴巻町</div><div class="ab cell" style="left:684px;top:50px;width:74px;height:24px;background:#d9e1f2">XXXX-X</div><div class="ab cell" style="left:759px;top:50px;width:213px;height:24px;background:#ffffff"></div><div class="ab cell" style="left:973px;top:50px;width:108px;height:24px;background:#d9e1f2">0354XXXXXX</div><div class="ab cell lk" style="left:1082px;top:50px;width:193px;height:24px;background:#ffffff">yoko@example.com</div><div class="ab cell rt" style="left:1276px;top:50px;width:92px;height:24px;background:#d9e1f2">2011/8/15</div><div class="ab cell" style="left:29px;top:75px;width:81px;height:24px;background:#d9e1f2">11-002</div><div class="ab cell" style="left:111px;top:75px;width:72px;height:24px;background:#ffffff">市原</div><div class="ab cell" style="left:184px;top:75px;width:72px;height:24px;background:#d9e1f2">君江</div><div class="ab cell rt" style="left:257px;top:75px;width:90px;height:24px;background:#ffffff">1964/10/4</div><div class="ab cell" style="left:348px;top:75px;width:81px;height:24px;background:#d9e1f2">226-0026</div><div class="ab cell" style="left:430px;top:75px;width:253px;height:24px;background:#ffffff">神奈川県横浜市緑区長津田町</div><div class="ab cell" style="left:684px;top:75px;width:74px;height:24px;background:#d9e1f2">1-1-X</div><div class="ab cell" style="left:759px;top:75px;width:213px;height:24px;background:#ffffff"></div><div class="ab cell" style="left:973px;top:75px;width:108px;height:24px;background:#d9e1f2">045XXXXXXX</div><div class="ab cell lk" style="left:1082px;top:75px;width:193px;height:24px;background:#ffffff">kimie@example.com</div><div class="ab cell rt" style="left:1276px;top:75px;width:92px;height:24px;background:#d9e1f2">2011/8/20</div><div class="ab cell" style="left:29px;top:100px;width:81px;height:24px;background:#d9e1f2">11-003</div><div class="ab cell" style="left:111px;top:100px;width:72px;height:24px;background:#ffffff">大河内</div><div class="ab cell" style="left:184px;top:100px;width:72px;height:24px;background:#d9e1f2">武久</div><div class="ab cell rt" style="left:257px;top:100px;width:90px;height:24px;background:#ffffff">1985/5/18</div><div class="ab cell" style="left:348px;top:100px;width:81px;height:24px;background:#d9e1f2">252-0222</div><div class="ab cell" style="left:430px;top:100px;width:253px;height:24px;background:#ffffff">神奈川県相模原市中央区由野台</div><div class="ab cell" style="left:684px;top:100px;width:74px;height:24px;background:#d9e1f2">X-X-X</div><div class="ab cell" style="left:759px;top:100px;width:213px;height:24px;background:#ffffff">コズミックハイツXXX</div><div class="ab cell" style="left:973px;top:100px;width:108px;height:24px;background:#d9e1f2">042XXXXXXX</div><div class="ab cell lk" style="left:1082px;top:100px;width:193px;height:24px;background:#ffffff">take_okoi@example.com</div><div class="ab cell rt" style="left:1276px;top:100px;width:92px;height:24px;background:#d9e1f2">2011/8/1</div><div class="ab cell" style="left:29px;top:125px;width:81px;height:24px;background:#d9e1f2">11-004</div><div class="ab cell" style="left:111px;top:125px;width:72px;height:24px;background:#ffffff">香川</div><div class="ab cell" style="left:184px;top:125px;width:72px;height:24px;background:#d9e1f2">知佳</div><div class="ab cell rt" style="left:257px;top:125px;width:90px;height:24px;background:#ffffff">1973/11/18</div><div class="ab cell" style="left:348px;top:125px;width:81px;height:24px;background:#d9e1f2">690-0873</div><div class="ab cell" style="left:430px;top:125px;width:253px;height:24px;background:#ffffff">島根県松江市内中原町</div><div class="ab cell" style="left:684px;top:125px;width:74px;height:24px;background:#d9e1f2">X-XX</div><div class="ab cell" style="left:759px;top:125px;width:213px;height:24px;background:#ffffff"></div><div class="ab cell" style="left:973px;top:125px;width:108px;height:24px;background:#d9e1f2">0852XXXXXX</div><div class="ab cell lk" style="left:1082px;top:125px;width:193px;height:24px;background:#ffffff">kagawa@xxxx.jp</div><div class="ab cell rt" style="left:1276px;top:125px;width:92px;height:24px;background:#d9e1f2">2011/9/10</div><div class="ab cell" style="left:29px;top:150px;width:81px;height:24px;background:#d9e1f2">11-005</div><div class="ab cell" style="left:111px;top:150px;width:72px;height:24px;background:#ffffff">木村</div><div class="ab cell" style="left:184px;top:150px;width:72px;height:24px;background:#d9e1f2">由利子</div><div class="ab cell rt" style="left:257px;top:150px;width:90px;height:24px;background:#ffffff">1964/8/5</div><div class="ab cell" style="left:348px;top:150px;width:81px;height:24px;background:#d9e1f2">812-0053</div><div class="ab cell" style="left:430px;top:150px;width:253px;height:24px;background:#ffffff">福岡県福岡市東区箱崎</div><div class="ab cell" style="left:684px;top:150px;width:74px;height:24px;background:#d9e1f2">2-1X-X</div><div class="ab cell" style="left:759px;top:150px;width:213px;height:24px;background:#ffffff">箱崎コーポXXX</div><div class="ab cell" style="left:973px;top:150px;width:108px;height:24px;background:#d9e1f2">092XXXXXXX</div><div class="ab cell lk" style="left:1082px;top:150px;width:193px;height:24px;background:#ffffff">yurikim@example.com</div><div class="ab cell rt" style="left:1276px;top:150px;width:92px;height:24px;background:#d9e1f2">2011/9/25</div><div class="ab cell" style="left:29px;top:175px;width:81px;height:24px;background:#a6acb6">11-006</div><div class="ab cell" style="left:111px;top:175px;width:72px;height:24px;background:#ffffff">飯泉</div><div class="ab cell" style="left:184px;top:175px;width:72px;height:24px;background:#a6acb6">昭義</div><div class="ab cell rt" style="left:257px;top:175px;width:90px;height:24px;background:#c6c6c6">1980/4/26</div><div class="ab cell" style="left:348px;top:175px;width:81px;height:24px;background:#a6acb6">060-0812</div><div class="ab cell" style="left:430px;top:175px;width:253px;height:24px;background:#c6c6c6">北海道札幌市北区北十二条西</div><div class="ab cell" style="left:684px;top:175px;width:74px;height:24px;background:#a6acb6">X-X-X</div><div class="ab cell" style="left:759px;top:175px;width:213px;height:24px;background:#c6c6c6">ノースハウスXXX</div><div class="ab cell" style="left:973px;top:175px;width:108px;height:24px;background:#a6acb6">011XXXXXXX</div><div class="ab cell lk" style="left:1082px;top:175px;width:193px;height:24px;background:#c6c6c6">zumi_aki@xxxx.com</div><div class="ab cell rt" style="left:1276px;top:175px;width:92px;height:24px;background:#a6acb6">2011/10/1</div><div class="ab cell" style="left:29px;top:200px;width:81px;height:24px;background:#d9e1f2">11-007</div><div class="ab cell" style="left:111px;top:200px;width:72px;height:24px;background:#ffffff">西山</div><div class="ab cell" style="left:184px;top:200px;width:72px;height:24px;background:#d9e1f2">平蔵</div><div class="ab cell rt" style="left:257px;top:200px;width:90px;height:24px;background:#ffffff">1969/7/19</div><div class="ab cell" style="left:348px;top:200px;width:81px;height:24px;background:#d9e1f2">098-6758</div><div class="ab cell" style="left:430px;top:200px;width:253px;height:24px;background:#ffffff">北海道稚内市宗谷岬</div><div class="ab cell" style="left:684px;top:200px;width:74px;height:24px;background:#d9e1f2">101-X</div><div class="ab cell" style="left:759px;top:200px;width:213px;height:24px;background:#ffffff"></div><div class="ab cell" style="left:973px;top:200px;width:108px;height:24px;background:#d9e1f2">0162XXXXXX</div><div class="ab cell lk" style="left:1082px;top:200px;width:193px;height:24px;background:#ffffff">heikichi11@xxxx.jp</div><div class="ab cell rt" style="left:1276px;top:200px;width:92px;height:24px;background:#d9e1f2">2011/10/10</div><div class="ab cell" style="left:29px;top:225px;width:81px;height:24px;background:#d9e1f2">11-008</div><div class="ab cell" style="left:111px;top:225px;width:72px;height:24px;background:#ffffff">山本</div><div class="ab cell" style="left:184px;top:225px;width:72px;height:24px;background:#d9e1f2">環</div><div class="ab cell rt" style="left:257px;top:225px;width:90px;height:24px;background:#ffffff">1979/11/2</div><div class="ab cell" style="left:348px;top:225px;width:81px;height:24px;background:#d9e1f2">604-8436</div><div class="ab cell" style="left:430px;top:225px;width:253px;height:24px;background:#ffffff">京都府京都市中京区西ノ京下合町</div><div class="ab cell" style="left:684px;top:225px;width:74px;height:24px;background:#d9e1f2">XXXX-X</div><div class="ab cell" style="left:759px;top:225px;width:213px;height:24px;background:#ffffff"></div><div class="ab cell" style="left:973px;top:225px;width:108px;height:24px;background:#d9e1f2">075XXXXXXX</div><div class="ab cell lk" style="left:1082px;top:225px;width:193px;height:24px;background:#ffffff">tamayama@xxx.com</div><div class="ab cell rt" style="left:1276px;top:225px;width:92px;height:24px;background:#d9e1f2">2011/10/15</div><div class="ab cell" style="left:29px;top:250px;width:81px;height:24px;background:#d9e1f2">11-009</div><div class="ab cell" style="left:111px;top:250px;width:72px;height:24px;background:#ffffff">萩原</div><div class="ab cell" style="left:184px;top:250px;width:72px;height:24px;background:#d9e1f2">幸雄</div><div class="ab cell rt" style="left:257px;top:250px;width:90px;height:24px;background:#ffffff">1953/2/27</div><div class="ab cell" style="left:348px;top:250px;width:81px;height:24px;background:#d9e1f2">940-0063</div><div class="ab cell" style="left:430px;top:250px;width:253px;height:24px;background:#ffffff">新潟県長岡市旭町</div><div class="ab cell" style="left:684px;top:250px;width:74px;height:24px;background:#d9e1f2">X-X-X</div><div class="ab cell" style="left:759px;top:250px;width:213px;height:24px;background:#ffffff">コーポフェニックスXXX</div><div class="ab cell" style="left:973px;top:250px;width:108px;height:24px;background:#d9e1f2">0258XXXXXX</div><div class="ab cell lk" style="left:1082px;top:250px;width:193px;height:24px;background:#ffffff">yukii-o@example.com</div><div class="ab cell rt" style="left:1276px;top:250px;width:92px;height:24px;background:#d9e1f2">2011/10/20</div><div class="ab cell" style="left:29px;top:275px;width:81px;height:24px;background:#d9e1f2">11-010</div><div class="ab cell" style="left:111px;top:275px;width:72px;height:24px;background:#ffffff">都筑</div><div class="ab cell" style="left:184px;top:275px;width:72px;height:24px;background:#d9e1f2">京太郎</div><div class="ab cell rt" style="left:257px;top:275px;width:90px;height:24px;background:#ffffff">1958/12/15</div><div class="ab cell" style="left:348px;top:275px;width:81px;height:24px;background:#d9e1f2">850-0036</div><div class="ab cell" style="left:430px;top:275px;width:253px;height:24px;background:#ffffff">長崎県長崎市五島町</div><div class="ab cell" style="left:684px;top:275px;width:74px;height:24px;background:#d9e1f2">X-XXXX</div><div class="ab cell" style="left:759px;top:275px;width:213px;height:24px;background:#ffffff"></div><div class="ab cell" style="left:973px;top:275px;width:108px;height:24px;background:#d9e1f2">0959XXXXXX</div><div class="ab cell lk" style="left:1082px;top:275px;width:193px;height:24px;background:#ffffff">tuzukiyo@xxx.jp</div><div class="ab cell rt" style="left:1276px;top:275px;width:92px;height:24px;background:#d9e1f2">2011/11/1</div><div class="ab cell" style="left:29px;top:300px;width:81px;height:24px;background:#d9e1f2">12-001</div><div class="ab cell" style="left:111px;top:300px;width:72px;height:24px;background:#ffffff">奈良沢</div><div class="ab cell" style="left:184px;top:300px;width:72px;height:24px;background:#d9e1f2">亮太</div><div class="ab cell rt" style="left:257px;top:300px;width:90px;height:24px;background:#ffffff">1977/9/10</div><div class="ab cell" style="left:348px;top:300px;width:81px;height:24px;background:#d9e1f2">320-0043</div><div class="ab cell" style="left:430px;top:300px;width:253px;height:24px;background:#ffffff">栃木県宇都宮市桜</div><div class="ab cell" style="left:684px;top:300px;width:74px;height:24px;background:#d9e1f2">1-X-20</div><div class="ab cell" style="left:759px;top:300px;width:213px;height:24px;background:#ffffff"></div><div class="ab cell" style="left:973px;top:300px;width:108px;height:24px;background:#d9e1f2">0286XXXXXX</div><div class="ab cell lk" style="left:1082px;top:300px;width:193px;height:24px;background:#ffffff">ryonara@example.com</div><div class="ab cell rt" style="left:1276px;top:300px;width:92px;height:24px;background:#d9e1f2">2012/11/10</div><div class="ab cell" style="left:29px;top:325px;width:81px;height:24px;background:#d9e1f2">12-002</div><div class="ab cell" style="left:111px;top:325px;width:72px;height:24px;background:#ffffff">高橋</div><div class="ab cell" style="left:184px;top:325px;width:72px;height:24px;background:#d9e1f2">裕子</div><div class="ab cell rt" style="left:257px;top:325px;width:90px;height:24px;background:#ffffff">1983/10/29</div><div class="ab cell" style="left:348px;top:325px;width:81px;height:24px;background:#d9e1f2">230-0051</div><div class="ab cell" style="left:430px;top:325px;width:253px;height:24px;background:#ffffff">神奈川県横浜市鶴見区鶴見中央</div><div class="ab cell" style="left:684px;top:325px;width:74px;height:24px;background:#d9e1f2">X-10-X</div><div class="ab cell" style="left:759px;top:325px;width:213px;height:24px;background:#ffffff">鶴見マンションＡ棟　XXX号</div><div class="ab cell" style="left:973px;top:325px;width:108px;height:24px;background:#d9e1f2">045XXXXXXX</div><div class="ab cell lk" style="left:1082px;top:325px;width:193px;height:24px;background:#ffffff">yukota@xxxx.com</div><div class="ab cell rt" style="left:1276px;top:325px;width:92px;height:24px;background:#d9e1f2">2012/11/20</div><div class="ab cell" style="left:29px;top:350px;width:81px;height:24px;background:#d9e1f2">12-003</div><div class="ab cell" style="left:111px;top:350px;width:72px;height:24px;background:#ffffff">竹原</div><div class="ab cell" style="left:184px;top:350px;width:72px;height:24px;background:#d9e1f2">美紀子</div><div class="ab cell rt" style="left:257px;top:350px;width:90px;height:24px;background:#ffffff">1961/7/31</div><div class="ab cell" style="left:348px;top:350px;width:81px;height:24px;background:#d9e1f2">980-0811</div><div class="ab cell" style="left:430px;top:350px;width:253px;height:24px;background:#ffffff">宮城県仙台市青葉区一番町</div><div class="ab cell" style="left:684px;top:350px;width:74px;height:24px;background:#d9e1f2">1-1-X</div><div class="ab cell" style="left:759px;top:350px;width:213px;height:24px;background:#ffffff"></div><div class="ab cell" style="left:973px;top:350px;width:108px;height:24px;background:#d9e1f2">022XXXXXXX</div><div class="ab cell lk" style="left:1082px;top:350px;width:193px;height:24px;background:#ffffff">takehara@xxx.jp</div><div class="ab cell rt" style="left:1276px;top:350px;width:92px;height:24px;background:#d9e1f2">2012/1/15</div><div class="ab cell" style="left:29px;top:375px;width:81px;height:24px;background:#d9e1f2">12-004</div><div class="ab cell" style="left:111px;top:375px;width:72px;height:24px;background:#ffffff">宇野沢</div><div class="ab cell" style="left:184px;top:375px;width:72px;height:24px;background:#d9e1f2">美奈</div><div class="ab cell rt" style="left:257px;top:375px;width:90px;height:24px;background:#ffffff">1981/5/2</div><div class="ab cell" style="left:348px;top:375px;width:81px;height:24px;background:#d9e1f2">790-0845</div><div class="ab cell" style="left:430px;top:375px;width:253px;height:24px;background:#ffffff">愛媛県松山市道後今市</div><div class="ab cell" style="left:684px;top:375px;width:74px;height:24px;background:#d9e1f2">121-X</div><div class="ab cell" style="left:759px;top:375px;width:213px;height:24px;background:#ffffff">ハイツスプリングXXX</div><div class="ab cell" style="left:973px;top:375px;width:108px;height:24px;background:#d9e1f2">0899XXXXXX</div><div class="ab cell lk" style="left:1082px;top:375px;width:193px;height:24px;background:#ffffff">unomi@excample.com</div><div class="ab cell rt" style="left:1276px;top:375px;width:92px;height:24px;background:#d9e1f2">2012/12/10</div><div class="ab cell" style="left:29px;top:400px;width:81px;height:24px;background:#d9e1f2">12-005</div><div class="ab cell" style="left:111px;top:400px;width:72px;height:24px;background:#ffffff">湯河原</div><div class="ab cell" style="left:184px;top:400px;width:72px;height:24px;background:#d9e1f2">恵子</div><div class="ab cell rt" style="left:257px;top:400px;width:90px;height:24px;background:#ffffff">1958/3/12</div><div class="ab cell" style="left:348px;top:400px;width:81px;height:24px;background:#d9e1f2">162-0041</div><div class="ab cell" style="left:430px;top:400px;width:253px;height:24px;background:#ffffff">東京都新宿区早稲田鶴巻町</div><div class="ab cell" style="left:684px;top:400px;width:74px;height:24px;background:#d9e1f2">XXXX-X</div><div class="ab cell" style="left:759px;top:400px;width:213px;height:24px;background:#ffffff"></div><div class="ab cell" style="left:973px;top:400px;width:108px;height:24px;background:#d9e1f2">0354XXXXXX</div><div class="ab cell lk" style="left:1082px;top:400px;width:193px;height:24px;background:#ffffff">keiko@example.com</div><div class="ab cell rt" style="left:1276px;top:400px;width:92px;height:24px;background:#d9e1f2">2012/8/15</div><div class="ab cell" style="left:29px;top:425px;width:81px;height:24px;background:#d9e1f2">12-006</div><div class="ab cell" style="left:111px;top:425px;width:72px;height:24px;background:#ffffff">市川</div><div class="ab cell" style="left:184px;top:425px;width:72px;height:24px;background:#d9e1f2">幸恵</div><div class="ab cell rt" style="left:257px;top:425px;width:90px;height:24px;background:#ffffff">1964/10/4</div><div class="ab cell" style="left:348px;top:425px;width:81px;height:24px;background:#d9e1f2">226-0026</div><div class="ab cell" style="left:430px;top:425px;width:253px;height:24px;background:#ffffff">神奈川県横浜市緑区長津田町</div><div class="ab cell" style="left:684px;top:425px;width:74px;height:24px;background:#d9e1f2">1-1-X</div><div class="ab cell" style="left:759px;top:425px;width:213px;height:24px;background:#ffffff">田園マンション1-XXX</div><div class="ab cell" style="left:973px;top:425px;width:108px;height:24px;background:#d9e1f2">045XXXXXXX</div><div class="ab cell lk" style="left:1082px;top:425px;width:193px;height:24px;background:#ffffff">ichikawa@example.com</div><div class="ab cell rt" style="left:1276px;top:425px;width:92px;height:24px;background:#d9e1f2">2012/8/20</div><div class="ab cell" style="left:29px;top:450px;width:81px;height:24px;background:#d9e1f2">12-007</div><div class="ab cell" style="left:111px;top:450px;width:72px;height:24px;background:#ffffff">小河内</div><div class="ab cell" style="left:184px;top:450px;width:72px;height:24px;background:#d9e1f2">恭平</div><div class="ab cell rt" style="left:257px;top:450px;width:90px;height:24px;background:#ffffff">1985/5/18</div><div class="ab cell" style="left:348px;top:450px;width:81px;height:24px;background:#d9e1f2">252-0222</div><div class="ab cell" style="left:430px;top:450px;width:253px;height:24px;background:#ffffff">神奈川県相模原市中央区由野台</div><div class="ab cell" style="left:684px;top:450px;width:74px;height:24px;background:#d9e1f2">X-X-X</div><div class="ab cell" style="left:759px;top:450px;width:213px;height:24px;background:#ffffff"></div><div class="ab cell" style="left:973px;top:450px;width:108px;height:24px;background:#d9e1f2">042XXXXXXX</div><div class="ab cell lk" style="left:1082px;top:450px;width:193px;height:24px;background:#ffffff">oko_kyo@example.com</div><div class="ab cell rt" style="left:1276px;top:450px;width:92px;height:24px;background:#d9e1f2">2012/8/1</div><div class="ab cell" style="left:29px;top:475px;width:81px;height:24px;background:#d9e1f2">13-001</div><div class="ab cell" style="left:111px;top:475px;width:72px;height:24px;background:#ffffff">高松</div><div class="ab cell" style="left:184px;top:475px;width:72px;height:24px;background:#d9e1f2">里香</div><div class="ab cell rt" style="left:257px;top:475px;width:90px;height:24px;background:#ffffff">1973/11/18</div><div class="ab cell" style="left:348px;top:475px;width:81px;height:24px;background:#d9e1f2">690-0873</div><div class="ab cell" style="left:430px;top:475px;width:253px;height:24px;background:#ffffff">島根県松江市内中原町</div><div class="ab cell" style="left:684px;top:475px;width:74px;height:24px;background:#d9e1f2">X-XX</div><div class="ab cell" style="left:759px;top:475px;width:213px;height:24px;background:#ffffff"></div><div class="ab cell" style="left:973px;top:475px;width:108px;height:24px;background:#d9e1f2">0852XXXXXX</div><div class="ab cell lk" style="left:1082px;top:475px;width:193px;height:24px;background:#ffffff">takamatxu@xxxx.jp</div><div class="ab cell rt" style="left:1276px;top:475px;width:92px;height:24px;background:#d9e1f2">2013/9/10</div><div class="ab cell" style="left:29px;top:500px;width:81px;height:24px;background:#d9e1f2">13-002</div><div class="ab cell" style="left:111px;top:500px;width:72px;height:24px;background:#ffffff">香月</div><div class="ab cell" style="left:184px;top:500px;width:72px;height:24px;background:#d9e1f2">知子</div><div class="ab cell rt" style="left:257px;top:500px;width:90px;height:24px;background:#ffffff">1964/8/5</div><div class="ab cell" style="left:348px;top:500px;width:81px;height:24px;background:#d9e1f2">812-0053</div><div class="ab cell" style="left:430px;top:500px;width:253px;height:24px;background:#ffffff">福岡県福岡市東区箱崎</div><div class="ab cell" style="left:684px;top:500px;width:74px;height:24px;background:#d9e1f2">2-1X-X</div><div class="ab cell" style="left:759px;top:500px;width:213px;height:24px;background:#ffffff"></div><div class="ab cell" style="left:973px;top:500px;width:108px;height:24px;background:#d9e1f2">092XXXXXXX</div><div class="ab cell lk" style="left:1082px;top:500px;width:193px;height:24px;background:#ffffff">kazuki@example.com</div><div class="ab cell rt" style="left:1276px;top:500px;width:92px;height:24px;background:#d9e1f2">2013/9/25</div><div class="ab" style="left:110px;top:24px;width:1px;height:717px;background:#000"></div><div class="ab" style="left:183px;top:24px;width:1px;height:717px;background:#000"></div><div class="ab" style="left:256px;top:24px;width:1px;height:717px;background:#000"></div><div class="ab" style="left:347px;top:24px;width:1px;height:717px;background:#000"></div><div class="ab" style="left:429px;top:24px;width:1px;height:717px;background:#000"></div><div class="ab" style="left:683px;top:24px;width:1px;height:717px;background:#000"></div><div class="ab" style="left:758px;top:24px;width:1px;height:717px;background:#000"></div><div class="ab" style="left:972px;top:24px;width:1px;height:717px;background:#000"></div><div class="ab" style="left:1081px;top:24px;width:1px;height:717px;background:#000"></div><div class="ab" style="left:1275px;top:24px;width:1px;height:717px;background:#000"></div><div class="ab" style="left:1368px;top:24px;width:1px;height:717px;background:#000"></div><div class="ab" style="left:29px;top:49px;width:1344px;height:1px;background:#000"></div><div class="ab" style="left:29px;top:74px;width:1344px;height:1px;background:#000"></div><div class="ab" style="left:29px;top:99px;width:1344px;height:1px;background:#000"></div><div class="ab" style="left:29px;top:124px;width:1344px;height:1px;background:#000"></div><div class="ab" style="left:29px;top:149px;width:1344px;height:1px;background:#000"></div><div class="ab" style="left:29px;top:174px;width:1344px;height:1px;background:#000"></div><div class="ab" style="left:29px;top:199px;width:1344px;height:1px;background:#000"></div><div class="ab" style="left:29px;top:224px;width:1344px;height:1px;background:#000"></div><div class="ab" style="left:29px;top:249px;width:1344px;height:1px;background:#000"></div><div class="ab" style="left:29px;top:274px;width:1344px;height:1px;background:#000"></div><div class="ab" style="left:29px;top:299px;width:1344px;height:1px;background:#000"></div><div class="ab" style="left:29px;top:324px;width:1344px;height:1px;background:#000"></div><div class="ab" style="left:29px;top:349px;width:1344px;height:1px;background:#000"></div><div class="ab" style="left:29px;top:374px;width:1344px;height:1px;background:#000"></div><div class="ab" style="left:29px;top:399px;width:1344px;height:1px;background:#000"></div><div class="ab" style="left:29px;top:424px;width:1344px;height:1px;background:#000"></div><div class="ab" style="left:29px;top:449px;width:1344px;height:1px;background:#000"></div><div class="ab" style="left:29px;top:474px;width:1344px;height:1px;background:#000"></div><div class="ab" style="left:29px;top:499px;width:1344px;height:1px;background:#000"></div><div class="ab" style="left:29px;top:524px;width:1344px;height:1px;background:#000"></div></div><svg class="ab" style="left:0;top:0" width="1366" height="768" font-family="Liberation Sans, sans-serif"><rect x="25.5" y="384.8" width="1323.5" height="23.5" rx="3.5" fill="none" stroke="#ff0000" stroke-width="7.6"/><g transform="translate(0.8,1.2)"><path d="M471.4 323.3H482.6V327.90000000000003H476.0V353.2H482.6V357.8H471.4Z M568.2 323.3H558.7V327.90000000000003H563.6V353.2H558.7V357.8H568.2Z M581.5 337.4H611.4V341.6H581.5Z M594.35 325.3H598.5500000000001V353.7H594.35Z M622.5 323.3H633.5V327.90000000000003H627.1V353.2H633.5V357.8H622.5Z M739 323.3H728.4V327.90000000000003H734.4V353.2H728.4V357.8H739Z M751.2 337.4H782.2V341.6H751.2Z M764.6 325.3H768.8000000000001V353.7H764.6Z M793.4 323.8H802V328.40000000000003H798.0V353.7H802V358.3H793.4Z M811.4 337.4H844.2V341.6H811.4Z M825.6999999999999 325.3H829.9V353.7H825.6999999999999Z M862 323.8H853.5V328.40000000000003H857.4V353.7H853.5V358.3H862Z" fill="#bbbbbb" stroke="#bbbbbb" stroke-width="5.5" stroke-linejoin="round"/><circle cx="485.6" cy="293.7" r="18.5" fill="none" stroke="#bbbbbb" stroke-width="6.5"/><circle cx="485.6" cy="293.7" r="18.5" fill="none" stroke="#bbbbbb" stroke-width="2.3"/><path d="M488.8 280.1 V306.8 H483.2 V289 Q480.8 290.6 477.7 291.4 V286.6 Q482.2 284.8 484.4 280.1 Z" fill="#bbbbbb" stroke="#bbbbbb" stroke-width="5.5" stroke-linejoin="round"/><text x="510.00" y="306.01" font-size="35.62" fill="#bbbbbb" font-weight="bold" textLength="293.00" lengthAdjust="spacingAndGlyphs" stroke="#bbbbbb" stroke-width="6.5" stroke-linejoin="round">行全体を選択して</text><text x="486.70" y="353.90" font-size="38.96" fill="#bbbbbb" font-weight="bold" textLength="65.60" lengthAdjust="spacingAndGlyphs" stroke="#bbbbbb" stroke-width="5.5" stroke-linejoin="round">Ctrl</text><text x="637.50" y="353.90" font-size="38.96" fill="#bbbbbb" font-weight="bold" textLength="87.20" lengthAdjust="spacingAndGlyphs" stroke="#bbbbbb" stroke-width="5.5" stroke-linejoin="round">Shift</text><text x="873.50" y="353.48" font-size="39.06" fill="#bbbbbb" font-weight="bold" textLength="168.70" lengthAdjust="spacingAndGlyphs" stroke="#bbbbbb" stroke-width="6.5" stroke-linejoin="round">キーを押す</text></g><g transform="translate(0,0)"><path d="M471.4 323.3H482.6V327.90000000000003H476.0V353.2H482.6V357.8H471.4Z M568.2 323.3H558.7V327.90000000000003H563.6V353.2H558.7V357.8H568.2Z M581.5 337.4H611.4V341.6H581.5Z M594.35 325.3H598.5500000000001V353.7H594.35Z M622.5 323.3H633.5V327.90000000000003H627.1V353.2H633.5V357.8H622.5Z M739 323.3H728.4V327.90000000000003H734.4V353.2H728.4V357.8H739Z M751.2 337.4H782.2V341.6H751.2Z M764.6 325.3H768.8000000000001V353.7H764.6Z M793.4 323.8H802V328.40000000000003H798.0V353.7H802V358.3H793.4Z M811.4 337.4H844.2V341.6H811.4Z M825.6999999999999 325.3H829.9V353.7H825.6999999999999Z M862 323.8H853.5V328.40000000000003H857.4V353.7H853.5V358.3H862Z" fill="#ffffff" stroke="#ffffff" stroke-width="5.2" stroke-linejoin="round"/><circle cx="485.6" cy="293.7" r="18.5" fill="none" stroke="#ffffff" stroke-width="6.3"/><circle cx="485.6" cy="293.7" r="18.5" fill="none" stroke="#ffffff" stroke-width="2.3"/><path d="M488.8 280.1 V306.8 H483.2 V289 Q480.8 290.6 477.7 291.4 V286.6 Q482.2 284.8 484.4 280.1 Z" fill="#ffffff" stroke="#ffffff" stroke-width="5.2" stroke-linejoin="round"/><text x="510.00" y="306.01" font-size="35.62" fill="#ffffff" font-weight="bold" textLength="293.00" lengthAdjust="spacingAndGlyphs" stroke="#ffffff" stroke-width="6.2" stroke-linejoin="round">行全体を選択して</text><text x="486.70" y="353.90" font-size="38.96" fill="#ffffff" font-weight="bold" textLength="65.60" lengthAdjust="spacingAndGlyphs" stroke="#ffffff" stroke-width="5.2" stroke-linejoin="round">Ctrl</text><text x="637.50" y="353.90" font-size="38.96" fill="#ffffff" font-weight="bold" textLength="87.20" lengthAdjust="spacingAndGlyphs" stroke="#ffffff" stroke-width="5.2" stroke-linejoin="round">Shift</text><text x="873.50" y="353.48" font-size="39.06" fill="#ffffff" font-weight="bold" textLength="168.70" lengthAdjust="spacingAndGlyphs" stroke="#ffffff" stroke-width="6.2" stroke-linejoin="round">キーを押す</text></g><g transform="translate(0,0)"><path d="M471.4 323.3H482.6V327.90000000000003H476.0V353.2H482.6V357.8H471.4Z M568.2 323.3H558.7V327.90000000000003H563.6V353.2H558.7V357.8H568.2Z M581.5 337.4H611.4V341.6H581.5Z M594.35 325.3H598.5500000000001V353.7H594.35Z M622.5 323.3H633.5V327.90000000000003H627.1V353.2H633.5V357.8H622.5Z M739 323.3H728.4V327.90000000000003H734.4V353.2H728.4V357.8H739Z M751.2 337.4H782.2V341.6H751.2Z M764.6 325.3H768.8000000000001V353.7H764.6Z M793.4 323.8H802V328.40000000000003H798.0V353.7H802V358.3H793.4Z M811.4 337.4H844.2V341.6H811.4Z M825.6999999999999 325.3H829.9V353.7H825.6999999999999Z M862 323.8H853.5V328.40000000000003H857.4V353.7H853.5V358.3H862Z" fill="#ff0000" stroke="#ff0000" stroke-width="0.01" stroke-linejoin="round"/><circle cx="485.6" cy="293.7" r="18.5" fill="none" stroke="#ff0000" stroke-width="0.01"/><circle cx="485.6" cy="293.7" r="18.5" fill="none" stroke="#ff0000" stroke-width="2.3"/><path d="M488.8 280.1 V306.8 H483.2 V289 Q480.8 290.6 477.7 291.4 V286.6 Q482.2 284.8 484.4 280.1 Z" fill="#ff0000" stroke="#ff0000" stroke-width="0.01" stroke-linejoin="round"/><text x="510.00" y="306.01" font-size="35.62" fill="#ff0000" font-weight="bold" textLength="293.00" lengthAdjust="spacingAndGlyphs" stroke="#ff0000" stroke-width="1.4" stroke-linejoin="round">行全体を選択して</text><text x="486.70" y="353.90" font-size="38.96" fill="#ff0000" font-weight="bold" textLength="65.60" lengthAdjust="spacingAndGlyphs" stroke="#ff0000" stroke-width="0.6" stroke-linejoin="round">Ctrl</text><text x="637.50" y="353.90" font-size="38.96" fill="#ff0000" font-weight="bold" textLength="87.20" lengthAdjust="spacingAndGlyphs" stroke="#ff0000" stroke-width="0.6" stroke-linejoin="round">Shift</text><text x="873.50" y="353.48" font-size="39.06" fill="#ff0000" font-weight="bold" textLength="168.70" lengthAdjust="spacingAndGlyphs" stroke="#ff0000" stroke-width="1.4" stroke-linejoin="round">キーを押す</text></g></svg></body></html>
